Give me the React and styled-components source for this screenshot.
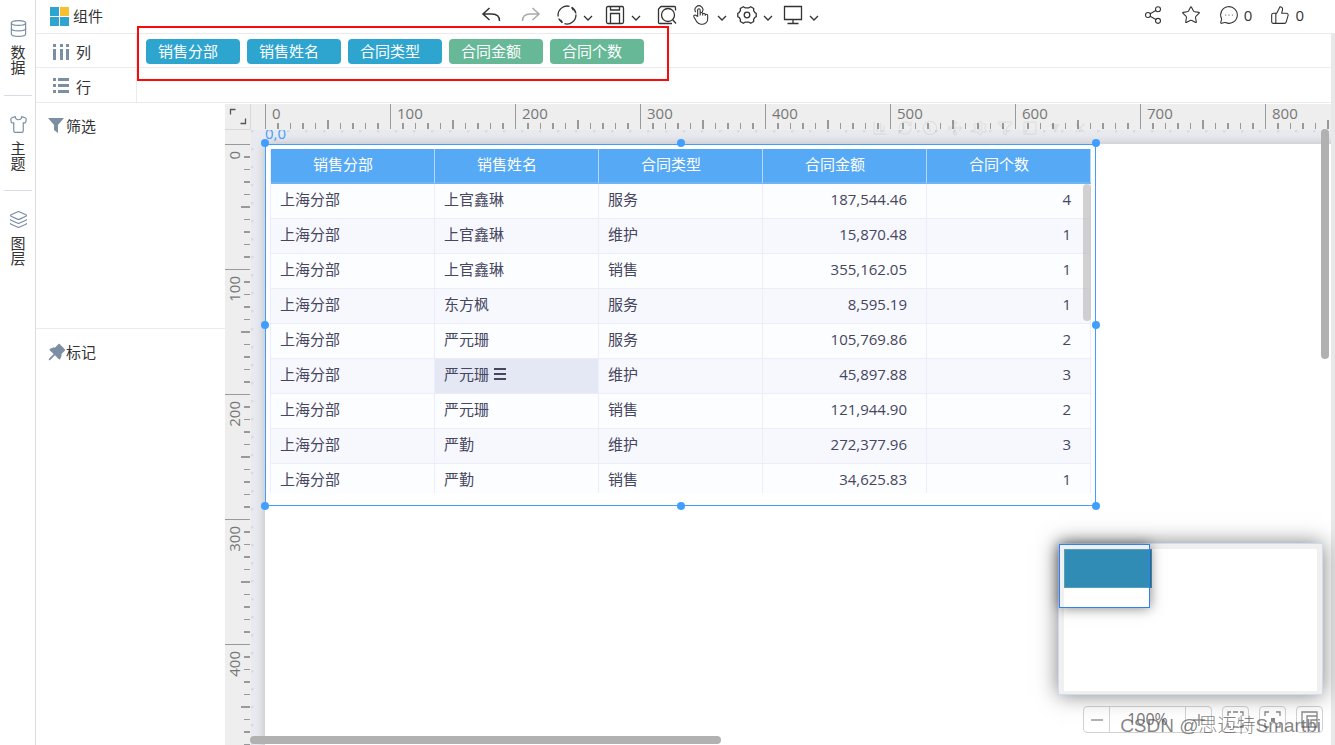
import React from 'react';
import styled, { createGlobalStyle } from 'styled-components';
import {
  Database,
  Funnel,
  Info,
  Layers,
  MessageCircleMore,
  Move,
  RefreshCw,
  Settings,
  Share2,
  Shirt,
  Square,
  Star,
  ThumbsUp,
  X,
  ChartColumn,
} from 'lucide-react';
import { AiFillPushpin } from 'react-icons/ai';

const GlobalStyle = createGlobalStyle`
  :root {
    --line: #ebebeb;
    --select: #409eff;
    --slate: #7b8ea3;
    --tick: #999;
  }
  * {
    box-sizing: border-box;
  }
  body {
    margin: 0;
    background: #fff;
    color: #333;
    font-family: "Open Sans", "Noto Sans CJK SC", sans-serif;
    font-size: 15px;
    line-height: 20px;
  }
  button {
    font: inherit;
    color: inherit;
    background: none;
    border: 0;
    padding: 0;
    cursor: pointer;
  }
  svg {
    display: block;
    flex: none;
  }
`;

const AppShell = styled.div`
  display: flex;
  height: 100vh;
  overflow: hidden;
`;

/* left rail */

const Rail = styled.nav`
  flex: none;
  width: 36px;
  border-right: 1px solid #dcdcdc;
  padding: 0 3px 0 4px;
`;
const RailButton = styled.button`
  display: flex;
  flex-direction: column;
  align-items: center;
  gap: 7px;
  width: 100%;
  height: 95px;
  padding-top: 19px;
  color: var(--slate);

  & + & {
    border-top: 1px solid #d8dae6;
  }
`;
const RailLabel = styled.span`
  width: 15px;
  color: #333;
  line-height: 15px;
`;

/* top bar */

const Main = styled.div`
  flex: 1;
  min-width: 0;
  display: flex;
  flex-direction: column;
`;
const TopBar = styled.header`
  flex: none;
  display: flex;
  align-items: center;
  height: 34px;
  padding: 0 31px 3px 14px;
  border-bottom: 1px solid var(--line);
`;
const Title = styled.div`
  flex: 0 1 427px;
  display: flex;
  align-items: center;
  gap: 4px;
  padding-top: 2px;
`;
const ToolGroup = styled.div`
  display: flex;
  align-items: center;
  gap: ${props => props.$gap}px;

  & + & {
    margin-left: 10px;
  }
`;
const ToolButton = styled.button`
  display: flex;
  align-items: center;
  gap: 6px;
  padding: 0 ${props => (props.$plain ? 4 : 0)}px;
  color: ${props => (props.$muted ? '#aaa' : '#333')};
`;
const ChevronBox = styled.span`
  padding-top: 6px;
`;
const SocialGroup = styled.div`
  display: flex;
  gap: 18px;
  margin-left: auto;
`;
const SocialButton = styled.button`
  display: flex;
  align-items: center;
  gap: 5px;
`;

/* shelves */

const Body = styled.div`
  flex: 1;
  min-height: 0;
  display: flex;
`;
const BodyContent = styled.div`
  flex: 1;
  min-width: 0;
  display: flex;
  flex-direction: column;
`;
const ScrollGutter = styled.div`
  flex: none;
  width: 4px;
  background: #e8e8e8;
`;
const Shelves = styled.section`
  flex: none;
  position: relative;
`;
const Shelf = styled.div`
  display: flex;
  height: ${props => (props.$tall ? 35 : 34)}px;
  border-bottom: 1px solid var(--line);
`;
const ShelfLabel = styled.div`
  display: flex;
  align-items: center;
  gap: 6px;
  width: 101px;
  padding: 3px 0 0 17px;
  border-right: 1px solid var(--line);
`;
const PillList = styled.div`
  display: flex;
  align-items: center;
  gap: 7px;
  padding: 1px 0 0 9px;
`;
const Pill = styled.button`
  width: 94px;
  height: 25px;
  padding: 0 12px 1px;
  border-radius: 4px;
  background: ${props => (props.$measure ? '#66b897' : '#2ea5cf')};
  color: #fff;
  text-align: left;
`;
const Highlight = styled.div`
  position: absolute;
  top: -8px;
  left: 101px;
  width: 532px;
  height: 55px;
  border: 2px solid #fb0a0a;
`;

/* side panels */

const Workspace = styled.div`
  flex: 1;
  min-height: 0;
  display: flex;
`;
const SidePanels = styled.aside`
  flex: none;
  width: 189px;
`;
const SidePanel = styled.section`
  padding: 13px 12px;

  &:first-child {
    height: 226px;
    border-bottom: 1px solid var(--line);
  }
`;
const PanelTitle = styled.h2`
  display: flex;
  align-items: center;
  margin: 0;
  font-size: 15px;
  font-weight: normal;

  svg {
    color: var(--slate);
  }
`;

/* rulers and canvas */

const Stage = styled.div`
  flex: 1;
  min-width: 0;
  position: relative;
  display: grid;
  grid-template-columns: 26px minmax(0, 1fr);
  grid-template-rows: 26px minmax(0, 1fr);
  margin-top: 1px;
`;
const RulerCorner = styled.button`
  display: flex;
  align-items: center;
  justify-content: center;
  background: #eee;
  border-right: 1px solid #d8d8d8;
  border-bottom: 1px solid #d8d8d8;
`;
const Ruler = styled.div`
  display: flex;
  flex-direction: ${props => (props.$vertical ? 'column' : 'row')};
  padding: ${props => (props.$vertical ? '14px 0 0' : '0 0 0 14px')};
  overflow: hidden;
  background: #eee;
`;
const RulerStep = styled.div`
  flex: none;
  position: relative;
  width: ${props => (props.$vertical ? 26 : 125)}px;
  height: ${props => (props.$vertical ? 125 : 26)}px;

  svg {
    position: absolute;
    inset: 0;
  }
`;
const RulerText = styled.span`
  display: block;
  color: #777;
  padding-left: 7px;
  line-height: 18px;

  ${props => props.$vertical && `
    padding: 0 0 7px;
    writing-mode: vertical-rl;
    transform: rotate(180deg);
    width: 18px;
  `}
`;
const Canvas = styled.div`
  position: relative;
  overflow: hidden;
  background: #e9eaef radial-gradient(circle at 1px 1px, #d8dae4 1px, transparent 2px);
  background-size: 18px 18px;
`;
const Page = styled.div`
  width: 100%;
  height: 100%;
  margin: 14px 0 0 14px;
  background: #fff;
  box-shadow: 0 0 10px rgba(0, 0, 0, 0.2);
`;
const Widget = styled.div`
  position: absolute;
  top: 14px;
  left: 14px;
  width: 831px;
  height: 362px;
  padding: 4px 4px 12px;
  border: 1px solid var(--select);
`;
const Coordinates = styled.span`
  position: absolute;
  top: -22px;
  left: -1px;
  color: var(--select);
`;
const HandleFrame = styled.div`
  position: absolute;
  inset: -2px -1px -1px;
`;
const Handle = styled.i`
  position: absolute;
  top: ${props => props.$y}%;
  left: ${props => props.$x}%;
  width: 8px;
  height: 8px;
  margin: -4px;
  border-radius: 50%;
  background: var(--select);
`;
const GhostTools = styled.div`
  position: absolute;
  top: 15px;
  left: 639px;
  display: flex;
  gap: 9px;
  padding: 1px 8px;
  color: #000;
  opacity: 0.05;
`;
const ScrollThumb = styled.div`
  position: absolute;
  border-radius: 4px;
  background: #b1b1b1;
  ${props => (props.$horizontal
    ? 'left: 25px; bottom: 1px; width: 471px; height: 8px;'
    : 'right: 2px; top: 25px; width: 8px; height: 230px;')}
`;

/* data table */

const TableView = styled.div`
  position: relative;
  height: 344px;
  overflow: hidden;
`;
const DataTable = styled.table`
  width: 100%;
  table-layout: fixed;
  border-collapse: separate;
  border-spacing: 0;
  border-left: 1px solid #ecedf8;
  color: #46465e;
`;
const HeadCell = styled.th`
  height: 35px;
  padding: 0 19px 4px 0;
  background: #56a9f4;
  border-right: 1px solid #b5d9fa;
  border-bottom: 2px solid #6fb5f4;
  color: #fff;
  font-weight: normal;
`;
const Row = styled.tr`
  background: #fcfdff;

  &:nth-child(even) {
    background: #f7f8fd;
  }
`;
const Cell = styled.td`
  height: 35px;
  padding: ${props => (props.$numeric ? '0 19px 4px 0' : '0 0 4px 9px')};
  border-right: 1px solid #ecedf8;
  border-bottom: 1px solid #ecedf8;
  text-align: ${props => (props.$numeric ? 'right' : 'left')};
  ${props => props.$active && 'background: #e4e8f5;'}
`;
const CellContent = styled.span`
  display: flex;
  align-items: center;
  gap: 5px;
`;
const TableThumb = styled.div`
  position: absolute;
  top: 35px;
  right: 0;
  width: 8px;
  height: 137px;
  border-radius: 4px;
  background: rgba(180, 180, 180, 0.6);
`;

/* minimap and zoom */

const Minimap = styled.div`
  position: absolute;
  right: 8px;
  bottom: 50px;
  width: 265px;
  height: 152px;
  padding: 5px 5px 3px;
  border: 1px solid #cddcf0;
  background: #f0f0f0;
  box-shadow: 0 0 20px rgba(0, 0, 0, 0.5);
`;
const MinimapPage = styled.div`
  height: 100%;
  background: #fff;
`;
const MinimapWidget = styled.div`
  width: 88px;
  height: 39px;
  background: #308cb5;
  border: 1px solid #5a9db8;
`;
const MinimapView = styled.div`
  position: absolute;
  top: 0;
  left: 0;
  width: 91px;
  height: 64px;
  border: 1px solid #2f80f5;
  box-shadow: 0 0 12px rgba(0, 0, 0, 0.5);
`;
const ZoomBar = styled.div`
  position: absolute;
  right: 8px;
  bottom: 12px;
  display: flex;
  gap: 10px;
  color: #888;
`;
const ZoomGroup = styled.div`
  display: flex;
  border: 1px solid #d2d2d2;
  border-radius: 4px;
`;
const ZoomValue = styled.output`
  width: 77px;
  border: 1px solid #d2d2d2;
  border-width: 0 1px;
  color: #777;
  font-size: 16px;
  line-height: 24px;
  text-align: center;
`;
const ZoomButton = styled.button`
  display: flex;
  align-items: center;
  justify-content: center;
  width: ${props => (props.$boxed ? 27 : 25)}px;
  height: ${props => (props.$boxed ? 27 : 25)}px;
  ${props => props.$boxed && `
    border: 1px solid #d2d2d2;
    border-radius: 4px;
  `}
`;
const Watermark = styled.div`
  position: absolute;
  right: 10px;
  bottom: 5px;
  color: rgba(80, 80, 80, 0.7);
  font-family: "Liberation Sans", "Noto Sans CJK SC", sans-serif;
  font-size: 19px;
  font-weight: 300;
  line-height: 28px;
  white-space: nowrap;
  pointer-events: none;
`;

const Icon = ({ size = 20, box = 20, children, ...rest }) => (
  <svg
    width={size}
    height={size}
    viewBox={`0 0 ${box} ${box}`}
    fill="none"
    stroke="currentColor"
    strokeWidth="1.3"
    {...rest}
  >
    {children}
  </svg>
);

const icons = {
  undo: (
    <Icon strokeWidth="1.5">
      <path d="M8.5 3 2 9l6.5 6M2 9h9c5 0 7.5 2.500 7.5 7" />
    </Icon>
  ),
  redo: (
    <Icon strokeWidth="1.5">
      <path d="M11.5 3 18 9l-6.5 6M18 9H9C4 9 1.5 11.5 1.5 16" />
    </Icon>
  ),
  refresh: (
    <Icon>
      <path d="M1.2 11.500A9 9 0 0 1 12.500 1.400M14.700 2.400A9 9 0 0 1 18.900 8.500M18.900 9.500A9 9 0 0 1 7.500 18.700M5.300 17.600A9 9 0 0 1 1.700 13.500" />
      <path d="m14.700 2.400 1.800 3M5.300 17.600l-1.800-3" />
    </Icon>
  ),
  save: (
    <Icon>
      <rect x="1.500" y="1.500" width="17" height="17" rx="1.500" />
      <path d="M5.500 1.500v3.500h9V1.500M5.500 18.500V8.500h9v10" />
    </Icon>
  ),
  preview: (
    <Icon>
      <path d="M18.500 5.500V2.500a1 1 0 0 0-1-1H4L1.500 4v13.500a1 1 0 0 0 1 1H15" />
      <circle cx="11" cy="10" r="6.500" />
      <path d="m15.500 14.500 3.500 4" />
    </Icon>
  ),
  hand: (
    <Icon box={24} strokeWidth="1.3">
      <path d="M8 14V6a1.500 1.500 0 0 1 3 0v6.500M11 11.500v-1a1.500 1.500 0 0 1 3 0v2M14 11.500a1.500 1.500 0 0 1 3 0v1.500M17 12.500a1.500 1.500 0 0 1 3 0V17a6 6 0 0 1-6 6h-2a6 6 0 0 1-5-2.700c-.500-.700-1.600-2.700-3.500-6a1.500 1.500 0 0 1 .500-2 1.900 1.900 0 0 1 2.300.300L8 14" />
      <path d="M5.700 8.500a4.700 4.700 0 1 1 7.600 0" />
    </Icon>
  ),
  gear: (
    <Icon>
      <path d="M6.300 1.700 8 2.800h4l1.700-1.100 3 1.800-.100 2.100 1.300 2 1.300.700v3.400l-1.300.700-1.300 2 .100 2.100-3 1.800-1.700-1.100H8l-1.700 1.100-3-1.800.100-2.100-1.300-2-1.300-.700V8.300l1.300-.700 1.300-2-.100-2.100z" strokeLinejoin="round" />
      <circle cx="10" cy="10" r="2.800" />
    </Icon>
  ),
  monitor: (
    <Icon>
      <path d="M1.500 1.500h17v13h-17zM10 14.500V18M4.500 18.500h11" />
    </Icon>
  ),
};

const mainTools = [
  { id: 'undo', label: '撤销' },
  { id: 'redo', label: '重做', muted: true },
  { id: 'refresh', label: '刷新', menu: true },
  { id: 'save', label: '保存', menu: true },
  { id: 'preview', label: '预览' },
];
const viewTools = [
  { id: 'hand', label: '交互', menu: true },
  { id: 'gear', label: '设置', menu: true },
  { id: 'monitor', label: '屏幕', menu: true },
];

const railItems = [
  { label: '数据', icon: Database },
  { label: '主题', icon: Shirt },
  { label: '图层', icon: Layers },
];

const columns = [
  { label: '销售分部' },
  { label: '销售姓名' },
  { label: '合同类型' },
  { label: '合同金额', measure: true },
  { label: '合同个数', measure: true },
];

const rows = [
  ['上海分部', '上官鑫琳', '服务', '187,544.46', '4'],
  ['上海分部', '上官鑫琳', '维护', '15,870.48', '1'],
  ['上海分部', '上官鑫琳', '销售', '355,162.05', '1'],
  ['上海分部', '东方枫', '服务', '8,595.19', '1'],
  ['上海分部', '严元珊', '服务', '105,769.86', '2'],
  ['上海分部', '严元珊', '维护', '45,897.88', '3'],
  ['上海分部', '严元珊', '销售', '121,944.90', '2'],
  ['上海分部', '严勤', '维护', '272,377.96', '3'],
  ['上海分部', '严勤', '销售', '34,625.83', '1'],
];
const activeCell = { row: 5, column: 1 };

// x, y in percent of the widget's box
const handles = [
  [0, 0], [50, 0], [100, 0],
  [0, 50], [100, 50],
  [0, 100], [50, 100], [100, 100],
];

const ticks = [0, 12, 25, 37, 50, 62, 75, 87, 100, 112];

const tickLength = (index) => {
  if (index === 0) return 26;
  return index === 5 ? 9 : 6;
};

const RulerScale = ({ vertical, values }) => (
  <Ruler $vertical={vertical}>
    {values.map(value => (
      <RulerStep key={value} $vertical={vertical}>
        <svg width={vertical ? 26 : 125} height={vertical ? 125 : 26} fill="var(--tick)">
          {ticks.map((at, index) => {
            const length = tickLength(index);
            const thickness = index % 2 ? 2 : 1;
            return vertical
              ? <rect key={at} x={25 - length} y={at} width={length} height={thickness} />
              : <rect key={at} x={at} y={25 - length} width={thickness} height={length} />;
          })}
        </svg>
        <RulerText $vertical={vertical}>{value}</RulerText>
      </RulerStep>
    ))}
  </Ruler>
);

const Tool = ({ tool }) => (
  <ToolButton $plain={!tool.menu} $muted={tool.muted} aria-label={tool.label}>
    {icons[tool.id]}
    {tool.menu && (
      <ChevronBox>
        <Icon size={10} box={10}><path d="m1 3 4 4 4-4" /></Icon>
      </ChevronBox>
    )}
  </ToolButton>
);

const Toolbar = () => (
  <TopBar>
    <Title>
      <svg width="19" height="19" fill="#2ea5cf">
        <rect width="9" height="9" />
        <rect x="10" width="9" height="9" fill="#f8c030" />
        <rect y="10" width="9" height="9" />
        <rect x="10" y="10" width="9" height="9" />
      </svg>
      组件
    </Title>
    <ToolGroup $gap={12}>
      {mainTools.map(tool => <Tool key={tool.id} tool={tool} />)}
    </ToolGroup>
    <ToolGroup $gap={10}>
      {viewTools.map(tool => <Tool key={tool.id} tool={tool} />)}
    </ToolGroup>
    <SocialGroup>
      <SocialButton aria-label="分享"><Share2 size={20} strokeWidth={1.3} /></SocialButton>
      <SocialButton aria-label="收藏"><Star size={20} strokeWidth={1.3} /></SocialButton>
      <SocialButton aria-label="评论">
        <MessageCircleMore size={20} strokeWidth={1.3} />
        0
      </SocialButton>
      <SocialButton aria-label="点赞">
        <ThumbsUp size={20} strokeWidth={1.3} />
        0
      </SocialButton>
    </SocialGroup>
  </TopBar>
);

const FieldShelves = () => (
  <Shelves>
    <Shelf>
      <ShelfLabel>
        <svg width="17" height="17" fill="var(--slate)">
          <path d="M0 0h3v3H0zM7 0h3v3H7zM13 0h3v3h-3zM0 5h3v11H0zM7 5h3v11H7zM13 5h3v11h-3z" />
        </svg>
        列
      </ShelfLabel>
      <PillList>
        {columns.map(column => (
          <Pill key={column.label} $measure={column.measure}>{column.label}</Pill>
        ))}
      </PillList>
    </Shelf>
    <Shelf $tall>
      <ShelfLabel>
        <svg width="17" height="17" fill="var(--slate)">
          <path d="M0 0h3v3H0zM5 0h11v3H5zM0 6h3v3H0zM5 6h11v3H5zM0 12h3v3H0zM5 12h11v3H5z" />
        </svg>
        行
      </ShelfLabel>
    </Shelf>
    <Highlight />
  </Shelves>
);

const ContractTable = () => (
  <TableView>
    <DataTable>
      <thead>
        <tr>
          {columns.map(column => <HeadCell key={column.label}>{column.label}</HeadCell>)}
        </tr>
      </thead>
      <tbody>
        {rows.map((row, rowIndex) => (
          <Row key={rowIndex}>
            {row.map((value, index) => {
              const active = rowIndex === activeCell.row && index === activeCell.column;
              return (
                <Cell key={index} $numeric={columns[index].measure} $active={active}>
                  {active ? (
                    <CellContent>
                      {value}
                      <svg width="12" height="12" fill="currentColor">
                        <path d="M0 0h12v2H0zM0 5h12v2H0zM0 10h12v2H0z" />
                      </svg>
                    </CellContent>
                  ) : value}
                </Cell>
              );
            })}
          </Row>
        ))}
      </tbody>
    </DataTable>
    <TableThumb />
  </TableView>
);

const ZoomControls = () => (
  <ZoomBar>
    <ZoomGroup>
      <ZoomButton aria-label="缩小">
        <Icon size={12} box={12}><path d="M0 6h12" /></Icon>
      </ZoomButton>
      <ZoomValue>100%</ZoomValue>
      <ZoomButton aria-label="放大">
        <Icon size={12} box={12}><path d="M0 6h12M6 0v12" /></Icon>
      </ZoomButton>
    </ZoomGroup>
    <ZoomButton $boxed aria-label="适应宽度">
      <Icon size={17} box={17}>
        <path d="M1 5V1h3M6 1h5M13 1h3v4M1 12v4h3M6 16h5M13 16h3v-4" />
      </Icon>
    </ZoomButton>
    <ZoomButton $boxed aria-label="适应屏幕">
      <Icon size={17} box={17}>
        <path d="M1 5V1h4M12 1h4v4M1 12v4h4M12 16h4v-4" />
        <rect x="7" y="7" width="4" height="4" fill="currentColor" stroke="none" />
      </Icon>
    </ZoomButton>
    <ZoomButton $boxed aria-label="鹰眼">
      <Icon size={17} box={17}><path d="M1 1h15v15H1zM16 5H6v11M16 9H10v7" /></Icon>
    </ZoomButton>
  </ZoomBar>
);

export default function App() {
  return (
    <AppShell>
      <GlobalStyle />
      <Rail>
        {railItems.map(({ label, icon: RailIcon }) => (
          <RailButton key={label}>
            <RailIcon size={19} strokeWidth={1.5} />
            <RailLabel>{label}</RailLabel>
          </RailButton>
        ))}
      </Rail>
      <Main>
        <Toolbar />
        <Body>
          <BodyContent>
            <FieldShelves />
            <Workspace>
              <SidePanels>
                <SidePanel>
                  <PanelTitle>
                    <Icon size={18} box={18} fill="currentColor" stroke="none">
                      <path d="M0 1h16l-6 7v8l-4-3V8z" />
                    </Icon>
                    筛选
                  </PanelTitle>
                </SidePanel>
                <SidePanel>
                  <PanelTitle>
                    <AiFillPushpin size={18} viewBox="100 100 824 824" />
                    标记
                  </PanelTitle>
                </SidePanel>
              </SidePanels>
              <Stage>
                <RulerCorner aria-label="全屏">
                  <Icon size={18} box={18} stroke="#555">
                    <path d="M1.5 6.5v-5h5M16.5 10.5v5h-5" />
                  </Icon>
                </RulerCorner>
                <RulerScale values={[0, 100, 200, 300, 400, 500, 600, 700, 800]} />
                <RulerScale vertical values={[0, 100, 200, 300, 400]} />
                <Canvas>
                  <Page />
                  <Widget>
                    <Coordinates>0,0</Coordinates>
                    <ContractTable />
                    <HandleFrame>
                      {handles.map(([x, y]) => <Handle key={`${x}-${y}`} $x={x} $y={y} />)}
                    </HandleFrame>
                  </Widget>
                </Canvas>
                <GhostTools>
                  <ChartColumn size={16} />
                  <RefreshCw size={16} />
                  <Info size={16} />
                  <Move size={16} />
                  <Settings size={16} />
                  <Funnel size={16} />
                  <Square size={16} />
                  <Icon size={16} box={16} fill="currentColor" stroke="none">
                    <path d="M3 4h10l-5 9z" />
                  </Icon>
                  <X size={16} />
                </GhostTools>
                <ScrollThumb />
                <ScrollThumb $horizontal />
                <ZoomControls />
                <Minimap>
                  <MinimapPage>
                    <MinimapWidget />
                  </MinimapPage>
                  <MinimapView />
                </Minimap>
                <Watermark>CSDN @思迈特Smartbi</Watermark>
              </Stage>
            </Workspace>
          </BodyContent>
          <ScrollGutter />
        </Body>
      </Main>
    </AppShell>
  );
}
